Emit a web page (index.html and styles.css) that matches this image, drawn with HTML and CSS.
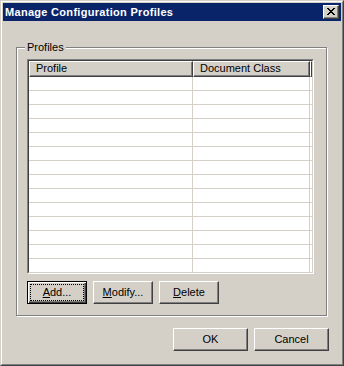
FILE: index.html
```html
<!DOCTYPE html>
<html>
<head>
<meta charset="utf-8">
<link rel="stylesheet" href="styles.css">
</head>
<body>
<div class="window">
  <div class="frame">
    <div class="titlebar">
      <span class="title">Manage Configuration Profiles</span>
      <button class="close" aria-label="Close">
        <svg width="8" height="7" viewBox="0 0 8 7" shape-rendering="crispEdges"><path fill="#000" d="M0 0h2v1H0z M6 0h2v1H6z M1 1h2v1H1z M5 1h2v1H5z M2 2h4v1H2z M3 3h2v1H3z M2 4h4v1H2z M1 5h2v1H1z M5 5h2v1H5z M0 6h2v1H0z M6 6h2v1H6z"/></svg>
      </button>
    </div>
    <div class="client">
      <div class="group">
        <div class="legend">Profiles</div>
        <div class="list">
          <div class="list-inner">
            <div class="header">
              <div class="hcell c1">Profile</div>
              <div class="hcell c2">Document Class</div>
              <div class="hcell c3"></div>
            </div>
            <div class="rows">
              <div class="row"><div class="cell c1"></div><div class="cell c2"></div></div>
              <div class="row"><div class="cell c1"></div><div class="cell c2"></div></div>
              <div class="row"><div class="cell c1"></div><div class="cell c2"></div></div>
              <div class="row"><div class="cell c1"></div><div class="cell c2"></div></div>
              <div class="row"><div class="cell c1"></div><div class="cell c2"></div></div>
              <div class="row"><div class="cell c1"></div><div class="cell c2"></div></div>
              <div class="row"><div class="cell c1"></div><div class="cell c2"></div></div>
              <div class="row"><div class="cell c1"></div><div class="cell c2"></div></div>
              <div class="row"><div class="cell c1"></div><div class="cell c2"></div></div>
              <div class="row"><div class="cell c1"></div><div class="cell c2"></div></div>
              <div class="row"><div class="cell c1"></div><div class="cell c2"></div></div>
              <div class="row"><div class="cell c1"></div><div class="cell c2"></div></div>
              <div class="row"><div class="cell c1"></div><div class="cell c2"></div></div>
              <div class="row"><div class="cell c1"></div><div class="cell c2"></div></div>
            </div>
          </div>
        </div>
        <div class="btnrow">
          <button class="btn default"><span class="focus"><u>A</u>dd...</span></button>
          <button class="btn"><span class="focus"><u>M</u>odify...</span></button>
          <button class="btn"><span class="focus"><u>D</u>elete</span></button>
        </div>
      </div>
      <div class="dlgbtns">
        <button class="btn wide"><span class="focus">OK</span></button>
        <button class="btn wide"><span class="focus">Cancel</span></button>
      </div>
    </div>
  </div>
</div>
</body>
</html>
```
FILE: styles.css
```css
html, body {
  margin: 0;
  padding: 0;
  background: #d4d0c8;
}
body {
  font-family: "Liberation Sans", Arial, sans-serif;
  font-size: 11px;
  color: #000;
}
.window {
  width: 344px;
  height: 366px;
  box-sizing: border-box;
  border: 1px solid;
  border-color: #d4d0c8 #404040 #404040 #d4d0c8;
  background: #d4d0c8;
}
.frame {
  height: 100%;
  box-sizing: border-box;
  border: 1px solid;
  border-color: #ffffff #808080 #808080 #ffffff;
  padding: 1px;
  display: flex;
  flex-direction: column;
}
.titlebar {
  height: 18px;
  flex: none;
  background: #0a246a;
  display: flex;
  align-items: center;
  justify-content: space-between;
  padding: 0 2px 0 2px;
}
.title {
  color: #fff;
  font-weight: bold;
  font-size: 11px;
  line-height: 13px;
  letter-spacing: 0.3px;
}
.close {
  width: 16px;
  height: 14px;
  box-sizing: border-box;
  padding: 0;
  margin: 0;
  border: 1px solid;
  border-color: #ffffff #404040 #404040 #ffffff;
  box-shadow: inset -1px -1px 0 #808080;
  background: #d4d0c8;
  display: flex;
  align-items: center;
  justify-content: center;
}
.close svg {
  display: block;
  margin: 0 1px 1px 0;
}
.client {
  flex: 1;
  display: flex;
  flex-direction: column;
}
.group {
  margin: 26px 14px 0 13px;
  border: 1px solid #808080;
  box-shadow: inset 1px 1px 0 #ffffff, 1px 1px 0 #ffffff;
  padding: 0 12px 11px 10px;
}
.legend {
  width: fit-content;
  margin: -7px 0 0 -2px;
  padding: 0 2px;
  line-height: 13px;
  background: #d4d0c8;
}
.list {
  margin-top: 5px;
  height: 215px;
  box-sizing: border-box;
  border: 1px solid;
  border-color: #808080 #ffffff #ffffff #808080;
}
.list-inner {
  height: 100%;
  box-sizing: border-box;
  border: 1px solid;
  border-color: #404040 #d4d0c8 #d4d0c8 #404040;
  background: #fff;
  overflow: hidden;
}
.header {
  display: flex;
  height: 16px;
}
.hcell {
  box-sizing: border-box;
  height: 16px;
  background: #d4d0c8;
  border: 1px solid;
  border-color: #ffffff #404040 #404040 #ffffff;
  box-shadow: inset -1px -1px 0 #808080;
  padding-left: 6px;
  line-height: 13px;
  white-space: nowrap;
  overflow: hidden;
}
.c1 { width: 164px; flex: none; }
.c2 { width: 117px; flex: none; }
.c3 { flex: 1; padding: 0; }
.row {
  display: flex;
  height: 14px;
  box-sizing: border-box;
  border-bottom: 1px solid #d4d0c8;
}
.cell {
  box-sizing: border-box;
  height: 13px;
  border-right: 1px solid #d4d0c8;
}
.btnrow {
  display: flex;
  gap: 6px;
  margin-top: 7px;
}
.btn {
  width: 60px;
  height: 23px;
  box-sizing: border-box;
  margin: 0;
  padding: 2px;
  border: 1px solid;
  border-color: #ffffff #404040 #404040 #ffffff;
  box-shadow: inset -1px -1px 0 #808080;
  background: #d4d0c8;
  font-family: "Liberation Sans", Arial, sans-serif;
  font-size: 11px;
  color: #000;
  display: flex;
}
.btn.default {
  border-color: #000;
  box-shadow: inset 1px 1px 0 #ffffff, inset -1px -1px 0 #404040, inset -2px -2px 0 #808080;
}
.focus {
  flex: 1;
  border: 1px solid transparent;
  display: flex;
  align-items: center;
  justify-content: center;
  line-height: 13px;
}
.btn.default .focus {
  border: 1px dotted #000;
}
.btn u {
  text-underline-offset: 1px;
}
.btn.wide {
  width: 75px;
}
.dlgbtns {
  display: flex;
  justify-content: flex-end;
  gap: 6px;
  margin: 12px 12px 0 0;
}
```
